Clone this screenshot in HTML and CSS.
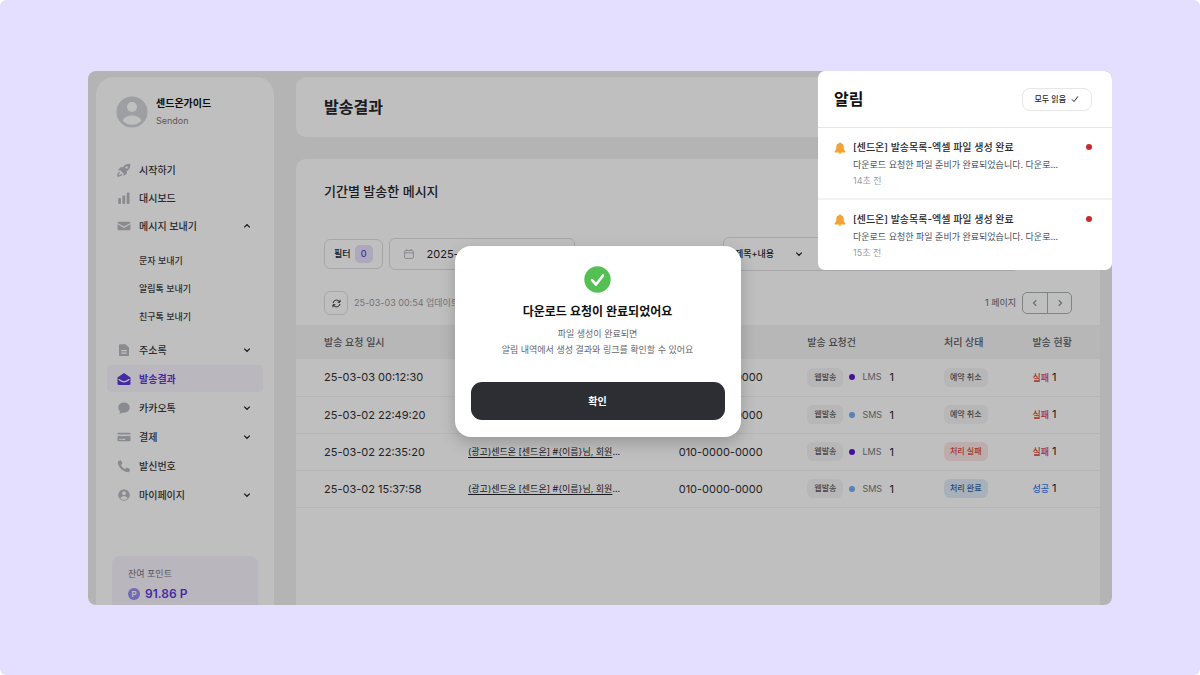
FILE: index.html
```html
<!DOCTYPE html>
<html lang="ko">
<head>
<meta charset="utf-8">
<meta name="viewport" content="width=device-width, initial-scale=1">
<title>발송결과</title>
<link rel="stylesheet" href="styles.css">
</head>
<body>
<svg class="sprite" aria-hidden="true">
  <symbol id="chev-down" viewBox="0 0 8 8"><path d="M1.2 2.6 4 5.3 6.8 2.6" fill="none" stroke="currentColor" stroke-width="1.2"/></symbol>
  <symbol id="chev-up" viewBox="0 0 8 8"><path d="M1.2 5.4 4 2.7 6.8 5.4" fill="none" stroke="currentColor" stroke-width="1.2"/></symbol>
  <symbol id="person" viewBox="0 0 32 32"><circle cx="16" cy="16" r="15.5" fill="currentColor"/><circle cx="16" cy="11" r="5" class="cut"/><path d="M6.5 24.5C8.5 21 12 19.5 16 19.5s7.500 1.500 9.500 5C23 27.300 19.700 28.700 16 28.700S9 27.300 6.500 24.500Z" class="cut"/></symbol>
  <symbol id="bell" viewBox="0 0 12 12"><path d="M4 10h4a2 2 0 0 1-4 0Z" fill="#f7d33c"/><path d="M6 .4c.6 0 1 .4 1 .9 1.700.4 2.800 1.900 2.800 3.700v2.300l1.500 1.900c.4.500.1 1.200-.5 1.200H1.200c-.6 0-.9-.7-.5-1.200l1.500-1.900V5c0-1.800 1.100-3.300 2.800-3.700 0-.5.400-.9 1-.9Z" fill="#f2a33a"/></symbol>
</svg>
<div class="app">
  <aside class="sidebar">
    <div class="profile">
      <svg class="avatar"><use href="#person"/></svg>
      <div>
        <p class="profile-name">센드온가이드</p>
        <p class="profile-id">Sendon</p>
      </div>
    </div>
    <nav>
      <ul class="menu menu-top">
        <li><a class="item" href="#"><svg class="icon" viewBox="0 0 14 14"><path d="M13.300.7c-3-.3-5.600.7-7.500 3.500H3.400L.9 7.300l2.600.2 3 3 .2 2.600 3.100-2.500V8.200C12.600 6.300 13.600 3.700 13.300.7Z" fill="currentColor"/><circle cx="9.600" cy="4.400" r="1.200" class="cut"/><path d="M2.800 9.300c-1.300.3-1.900 1.700-1.900 3.800 2.100 0 3.500-.6 3.800-1.900" fill="none" stroke="currentColor" stroke-width="1.300"/></svg>시작하기</a></li>
        <li><a class="item" href="#"><svg class="icon" viewBox="0 0 14 14" fill="currentColor"><rect x="1.200" y="7" width="2.800" height="6" rx="1"/><rect x="5.400" y="4.500" width="2.800" height="8.500" rx="1"/><rect x="9.700" y="1.500" width="2.800" height="11.500" rx="1"/></svg>대시보드</a></li>
        <li><a class="item" href="#"><svg class="icon" viewBox="0 0 14 14" fill="currentColor"><path d="M1.700 2.800h10.600c.7 0 1.200.4 1.200 1.100L7 7.500.5 3.900c0-.7.500-1.100 1.200-1.100Z"/><path d="M.5 5.300 7 8.900l6.500-3.600v4.800c0 .7-.5 1.200-1.200 1.200H1.700c-.7 0-1.200-.5-1.200-1.200Z"/></svg>메시지 보내기<svg class="chev"><use href="#chev-up"/></svg></a>
          <ul class="submenu">
            <li><a href="#">문자 보내기</a></li>
            <li><a href="#">알림톡 보내기</a></li>
            <li><a href="#">친구톡 보내기</a></li>
          </ul>
        </li>
      </ul>
      <ul class="menu menu-main">
        <li><a class="item" href="#"><svg class="icon" viewBox="0 0 14 14"><path d="M3 1.200h5.600L12 4.600V12c0 .6-.4 1-1 1H3c-.6 0-1-.4-1-1V2.200c0-.6.400-1 1-1Z" fill="currentColor"/><path d="M4.200 7.700h5.600M4.200 10.200h5.600" class="cut-line"/></svg>주소록<svg class="chev"><use href="#chev-down"/></svg></a></li>
        <li><a class="item active" href="#" aria-current="page"><svg class="icon" viewBox="0 0 14 14"><path d="M.5 5.400 7 1l6.500 4.400v6.400c0 .7-.5 1.200-1.200 1.200H1.700c-.7 0-1.200-.5-1.200-1.200Z" fill="currentColor"/><path d="M1.600 7.300C3.500 8.800 5 9.800 7 9.800s3.500-1 5.400-2.500" class="cut-line"/></svg>발송결과</a></li>
        <li><a class="item" href="#"><svg class="icon" viewBox="0 0 14 14"><path d="M7 1.500c3.300 0 5.700 2.200 5.700 5s-2.400 5.200-5.700 5.200c-.5 0-1 0-1.500-.2-.7.600-1.700 1.100-3.200 1.200.6-.8.7-1.600.6-2.400-1-1-1.600-2.300-1.600-3.800 0-2.800 2.400-5 5.700-5Z" fill="currentColor"/></svg>카카오톡<svg class="chev"><use href="#chev-down"/></svg></a></li>
        <li><a class="item" href="#"><svg class="icon" viewBox="0 0 14 14"><path d="M1.300 2.800h11.400c.5 0 .8.300.8.800v.8H.5v-.8c0-.5.300-.8.800-.8ZM.5 6h13v4.500c0 .5-.3.800-.8.800H1.300c-.5 0-.8-.3-.8-.8Z" fill="currentColor"/><path d="M2.300 9.300h2M5.200 9.300h3" class="cut-line"/></svg>결제<svg class="chev"><use href="#chev-down"/></svg></a></li>
        <li><a class="item" href="#"><svg class="icon" viewBox="0 0 14 14"><path d="m1.300 2.200 2-.9c.4-.2.800 0 1 .4l1 2.300c.2.400.1.700-.2 1L4 5.900C4.900 7.800 6.300 9.200 8.200 10.100l1-1.200c.2-.3.600-.4 1-.2l2.300 1c.4.200.5.500.4.900l-.5 2c-.1.400-.4.600-.8.600C5.800 13.200.9 8.300.8 3c0-.4.200-.7.500-.8Z" fill="currentColor"/></svg>발신번호</a></li>
        <li><a class="item" href="#"><svg class="icon icon-small"><use href="#person"/></svg>마이페이지<svg class="chev"><use href="#chev-down"/></svg></a></li>
      </ul>
    </nav>
    <section class="points">
      <p class="points-label">잔여 포인트</p>
      <p class="points-value"><span class="coin">P</span>91.86 P</p>
    </section>
  </aside>

  <main class="main">
    <header class="card title-card"><h1>발송결과</h1></header>
    <section class="card results">
      <h2>기간별 발송한 메시지</h2>
      <div class="filters">
        <button type="button" class="filter-btn">필터 <span class="count">0</span></button>
        <label class="date-box">
          <svg class="calendar" viewBox="0 0 10 10" fill="none" stroke="currentColor"><rect x=".6" y="1.500" width="8.800" height="7.900" rx="1.300"/><path d="M.6 3.800h8.800M2.800.2v1.500M7.200.2v1.500"/></svg>
          <input type="text" value="2025-02-03 ~ 2025-03-03" aria-label="조회 기간">
        </label>
        <div class="search-box">
          <select aria-label="검색 조건"><option>제목+내용</option></select>
          <svg class="chev"><use href="#chev-down"/></svg>
          <input type="search" aria-label="검색어">
        </div>
      </div>
      <div class="toolbar">
        <button type="button" class="refresh" aria-label="새로고침"><svg viewBox="0 0 10 10" fill="none" stroke="currentColor" stroke-width="1.100"><path d="M1.200 4.500C1.500 2.600 3 1.300 5 1.300c1.500 0 2.700.7 3.500 2M8.800 5.500C8.500 7.400 7 8.700 5 8.700c-1.500 0-2.700-.7-3.500-2"/><path d="M8.900.9v2.700H6.300M1.100 9.100V6.400h2.600"/></svg></button>
        <span class="updated">25-03-03 00:54 업데이트</span>
        <span class="page-label">1 페이지</span>
        <div class="pager">
          <button type="button" aria-label="이전"><svg viewBox="0 0 8 8"><path d="M5 1.800 2.800 4 5 6.200" fill="none" stroke="currentColor"/></svg></button>
          <button type="button" aria-label="다음"><svg viewBox="0 0 8 8"><path d="M3 1.800 5.200 4 3 6.200" fill="none" stroke="currentColor"/></svg></button>
        </div>
      </div>
      <table>
        <colgroup><col class="c-date"><col class="c-text"><col class="c-phone"><col class="c-req"><col class="c-state"><col class="c-result"></colgroup>
        <thead><tr><th>발송 요청 일시</th><th></th><th></th><th>발송 요청건</th><th>처리 상태</th><th>발송 현황</th></tr></thead>
        <tbody>
          <tr><td>25-03-03 00:12:30</td><td class="msg"></td><td>010-0000-0000</td><td><div class="req"><span class="tag">웹발송</span><i class="dot lms"></i><span class="kind">LMS</span>1</div></td><td><span class="tag state">예약 취소</span></td><td><span class="fail">실패</span> 1</td></tr>
          <tr><td>25-03-02 22:49:20</td><td class="msg"></td><td>010-0000-0000</td><td><div class="req"><span class="tag">웹발송</span><i class="dot sms"></i><span class="kind">SMS</span>1</div></td><td><span class="tag state">예약 취소</span></td><td><span class="fail">실패</span> 1</td></tr>
          <tr><td>25-03-02 22:35:20</td><td class="msg"><a href="#">(광고)센드온 [센드온] #{이름}님, 회원</a>...</td><td>010-0000-0000</td><td><div class="req"><span class="tag">웹발송</span><i class="dot lms"></i><span class="kind">LMS</span>1</div></td><td><span class="tag state failed">처리 실패</span></td><td><span class="fail">실패</span> 1</td></tr>
          <tr><td>25-03-02 15:37:58</td><td class="msg"><a href="#">(광고)센드온 [센드온] #{이름}님, 회원</a>...</td><td>010-0000-0000</td><td><div class="req"><span class="tag">웹발송</span><i class="dot sms"></i><span class="kind">SMS</span>1</div></td><td><span class="tag state done">처리 완료</span></td><td><span class="success">성공</span> 1</td></tr>
        </tbody>
      </table>
    </section>
  </main>

  <div class="overlay">
    <div class="dialog" role="dialog" aria-modal="true" aria-labelledby="dialog-title">
      <svg class="check" viewBox="0 0 27 27"><circle cx="13.500" cy="13.500" r="13.200" fill="#54c054"/><path d="m8 14.200 4 4.300 7-9" fill="none" stroke="#fff" stroke-width="2.600" stroke-linecap="round" stroke-linejoin="round"/></svg>
      <h3 id="dialog-title">다운로드 요청이 완료되었어요</h3>
      <p>파일 생성이 완료되면<br>알림 내역에서 생성 결과와 링크를 확인할 수 있어요</p>
      <button type="button">확인</button>
    </div>
  </div>

  <section class="notices" aria-labelledby="notice-title">
    <header>
      <h2 id="notice-title">알림</h2>
      <button type="button">모두 읽음 <svg viewBox="0 0 8 8"><path d="m1 4.400 2 2.200 4-5.200" fill="none" stroke="currentColor"/></svg></button>
    </header>
    <article>
      <svg class="bell"><use href="#bell"/></svg>
      <div class="notice-body">
        <h3>[센드온] 발송목록-엑셀 파일 생성 완료</h3>
        <p>다운로드 요청한 파일 준비가 완료되었습니다. 다운로...</p>
        <time>14초 전</time>
      </div>
      <i class="unread"></i>
    </article>
    <article>
      <svg class="bell"><use href="#bell"/></svg>
      <div class="notice-body">
        <h3>[센드온] 발송목록-엑셀 파일 생성 완료</h3>
        <p>다운로드 요청한 파일 준비가 완료되었습니다. 다운로...</p>
        <time>15초 전</time>
      </div>
      <i class="unread"></i>
    </article>
  </section>
</div>
</body>
</html>
```
FILE: styles.css
```css
* { box-sizing: border-box; margin: 0; padding: 0; }
ul { list-style: none; }
a { color: inherit; text-decoration: none; }
button, input, select { font: inherit; color: inherit; background: none; border: 0; }
button { cursor: pointer; }
svg { display: block; flex: none; }
html { background: #fff; }
body {
  display: flex;
  min-height: 100vh;
  padding: 71px 88px 70px;
  border-radius: 6px;
  background: #e4dfff;
  color: #26262b;
  font-family: Inter, "Noto Sans CJK KR", sans-serif;
  font-size: 10px;
  line-height: 16px;
}
.sprite { position: absolute; width: 0; height: 0; }
.cut { fill: #fff; }
.cut-line { fill: none; stroke: #fff; stroke-width: 1.2; }

.app {
  position: relative;
  flex: 1;
  display: flex;
  gap: 22px;
  height: calc(100vh - 141px);
  padding: 6px 12px 0 8px;
  overflow: hidden;
  border-radius: 8px;
  background: #f0f0f0;
}

/* Sidebar */
.sidebar { flex: 0 0 178px; padding: 16px 11px 0; background: #fff; border-radius: 18px 18px 0 0; overflow: hidden; }
.profile { display: flex; align-items: center; gap: 8px; padding: 2px 9px 0; }
.avatar { width: 32px; height: 32px; color: #d3d4d8; }
.profile-name { font-weight: 600; color: #111; line-height: 17px; }
.profile-id { font-size: 9px; color: #77777c; line-height: 17px; }
.menu { display: grid; }
.menu-top { gap: 1px; margin-top: 27px; }
.menu-main { gap: 2px; margin-top: 5px; }
.item { display: flex; align-items: center; height: 27px; padding: 0 12px 0 10px; border-radius: 5px; font-weight: 500; color: #38383c; }
.icon { width: 14px; height: 14px; margin-right: 8px; color: #b8babf; }
.icon-small { width: 12px; height: 12px; margin: 0 9px 0 1px; }
.chev { width: 8px; height: 8px; margin-left: auto; color: #222; }
.active { background: #f8f4ff; color: #5b39dc; font-weight: 600; }
.active .icon { color: #5b39dc; }
.submenu { padding: 8px 0 0 32px; font-size: 9px; font-weight: 500; color: #3c3c40; line-height: 28px; }
.points { margin: 48px 5px 0; padding: 10px 16px; height: 90px; background: #f7f3fd; border-radius: 8px; }
.points-label { font-size: 9px; color: #77747c; }
.points-value { display: flex; align-items: center; gap: 5px; margin-top: 4px; font-size: 12px; font-weight: 600; color: #5b39dc; }
.coin { display: grid; place-items: center; width: 12px; height: 12px; border-radius: 50%; background: #9b8df0; color: #fff; font-size: 8px; line-height: 12px; }

/* Main */
.main { flex: 1; min-width: 0; display: flex; flex-direction: column; gap: 22px; }
.card { background: #fff; border-radius: 10px; }
.title-card { padding: 18px 28px; }
h1 { font-size: 16px; line-height: 24px; font-weight: 600; }
.results { flex: 1; padding-top: 22px; border-radius: 10px 10px 0 0; }
.results h2 { padding: 0 28px; font-size: 13px; line-height: 20px; font-weight: 500; }
.filters { display: flex; align-items: center; gap: 6px; height: 34px; margin: 36px 28px 0; }
.filter-btn { display: flex; align-items: center; gap: 4px; height: 30px; padding: 0 9px; border: 1px solid #dedee0; border-radius: 6px; font-size: 9px; font-weight: 500; }
.count { width: 18px; line-height: 18px; border-radius: 5px; background: #e8e1fb; color: #5b39dc; text-align: center; }
.date-box { display: flex; align-items: center; gap: 13px; width: 186px; height: 32px; padding: 0 14px; border: 1px solid #dedee0; border-radius: 6px; }
.calendar { width: 10px; height: 10px; color: #b5b7bc; }
.date-box input { width: 100%; min-width: 0; font-size: 11px; }
.search-box { display: flex; align-items: center; width: 296px; height: 34px; margin: 0 53px 0 auto; padding-left: 11px; border: 1px solid #dedee0; border-radius: 6px; }
.search-box select { appearance: none; width: 60px; font-size: 9px; font-weight: 500; }
.search-box .chev { margin: 0; }
.search-box input { flex: 1; min-width: 0; }
.toolbar { display: flex; align-items: center; height: 24px; margin: 20px 28px 10px; }
.refresh { display: grid; place-items: center; width: 24px; height: 24px; border: 1px solid #dedee0; border-radius: 6px; }
.refresh svg { width: 9px; height: 9px; }
.updated { margin-left: 6px; font-size: 9px; color: #9a9aa0; }
.page-label { margin-left: auto; font-size: 9px; color: #66666b; }
.pager { display: flex; height: 22px; margin-left: 6px; border: 1px solid #a9b0b0; border-radius: 5px; color: #909498; }
.pager button { display: grid; place-items: center; width: 24px; }
.pager button + button { border-left: 1px solid #a9b0b0; }
.pager svg { width: 10px; height: 10px; }

table { width: 100%; table-layout: fixed; border-collapse: collapse; }
.c-date { width: 21.4%; }
.c-text { width: 26.2%; }
.c-phone { width: 16%; }
.c-req { width: 17%; }
.c-state { width: 11%; }
.c-result { width: 8.4%; }
th { height: 34px; background: #f5f5f5; color: #5c5c62; font-weight: 500; text-align: left; }
td { height: 37px; border-bottom: 1px solid #f3f3f3; font-size: 11px; white-space: nowrap; }
th:first-child, td:first-child { padding-left: 28px; }
td:first-child, td:nth-child(3) { color: #2f2f33; }
td.msg { font-size: 9px; }
.msg a { text-decoration: underline; text-underline-offset: 2px; }
.req { display: flex; align-items: center; }
.tag { display: inline-block; padding: 0 7px; border-radius: 6px; background: #f4f4f4; color: #5c5c62; font-size: 8px; line-height: 19px; font-weight: 500; }
.state { display: block; width: max-content; padding: 0 6px; }
.failed { background: #fbe6e6; color: #d64a4a; }
.done { background: #e0edf9; color: #2f5f9c; }
.dot { width: 6px; height: 6px; margin: 0 7px 0 6px; border-radius: 50%; }
.lms { background: #5a17cf; }
.sms { background: #74aef5; }
.kind { width: 27px; font-size: 9px; color: #77777c; }
.fail, .success { font-size: 9px; font-weight: 500; color: #de4343; }
.success { color: #3577ef; }

/* Dialog */
.overlay { position: absolute; inset: 0; display: grid; place-items: center; padding: 7px 5px 0 0; background: rgba(0, 0, 0, .25); }
.dialog { display: flex; flex-direction: column; align-items: center; width: 286px; padding: 20px 16px 17px; border-radius: 16px; background: #fff; box-shadow: 0 6px 16px rgba(0, 0, 0, .2); text-align: center; }
.check { width: 27px; height: 27px; }
.dialog h3 { margin-top: 10px; font-size: 12px; line-height: 18px; font-weight: 600; color: #111; }
.dialog p { margin-top: 5px; font-size: 9px; line-height: 16px; color: #66666c; }
.dialog button { width: 100%; height: 38px; margin-top: 24px; border-radius: 11px; background: #2d2e33; color: #fff; font-weight: 600; }

/* Notifications */
.notices { position: absolute; top: 0; right: 0; width: 294px; background: #fff; border-radius: 7px; }
.notices header { display: flex; align-items: center; justify-content: space-between; height: 57px; padding: 0 20px 0 16px; border-bottom: 1px solid #e6e6e8; }
.notices h2 { font-size: 16px; line-height: 24px; font-weight: 600; color: #111; }
.notices button { display: flex; align-items: center; gap: 5px; height: 23px; padding: 0 12px 0 11px; border: 1px solid #e6e6e8; border-radius: 8px; font-size: 8px; font-weight: 500; }
.notices button svg { width: 8px; height: 8px; }
.notices article { display: flex; gap: 7px; padding: 10px 20px 9px 16px; }
.notices article + article { border-top: 2px solid #f3f3f3; }
.bell { width: 12px; height: 12px; margin-top: 4px; }
.notice-body { flex: 1; min-width: 0; }
.notice-body h3 { font-size: 10px; line-height: 18px; font-weight: 500; }
.notice-body p { font-size: 9px; line-height: 17px; color: #4b4f5c; }
.notice-body time { display: block; font-size: 9px; line-height: 16px; color: #9a9ca3; }
.unread { width: 6px; height: 6px; margin-top: 6px; border-radius: 50%; background: #c72c2c; }
```
